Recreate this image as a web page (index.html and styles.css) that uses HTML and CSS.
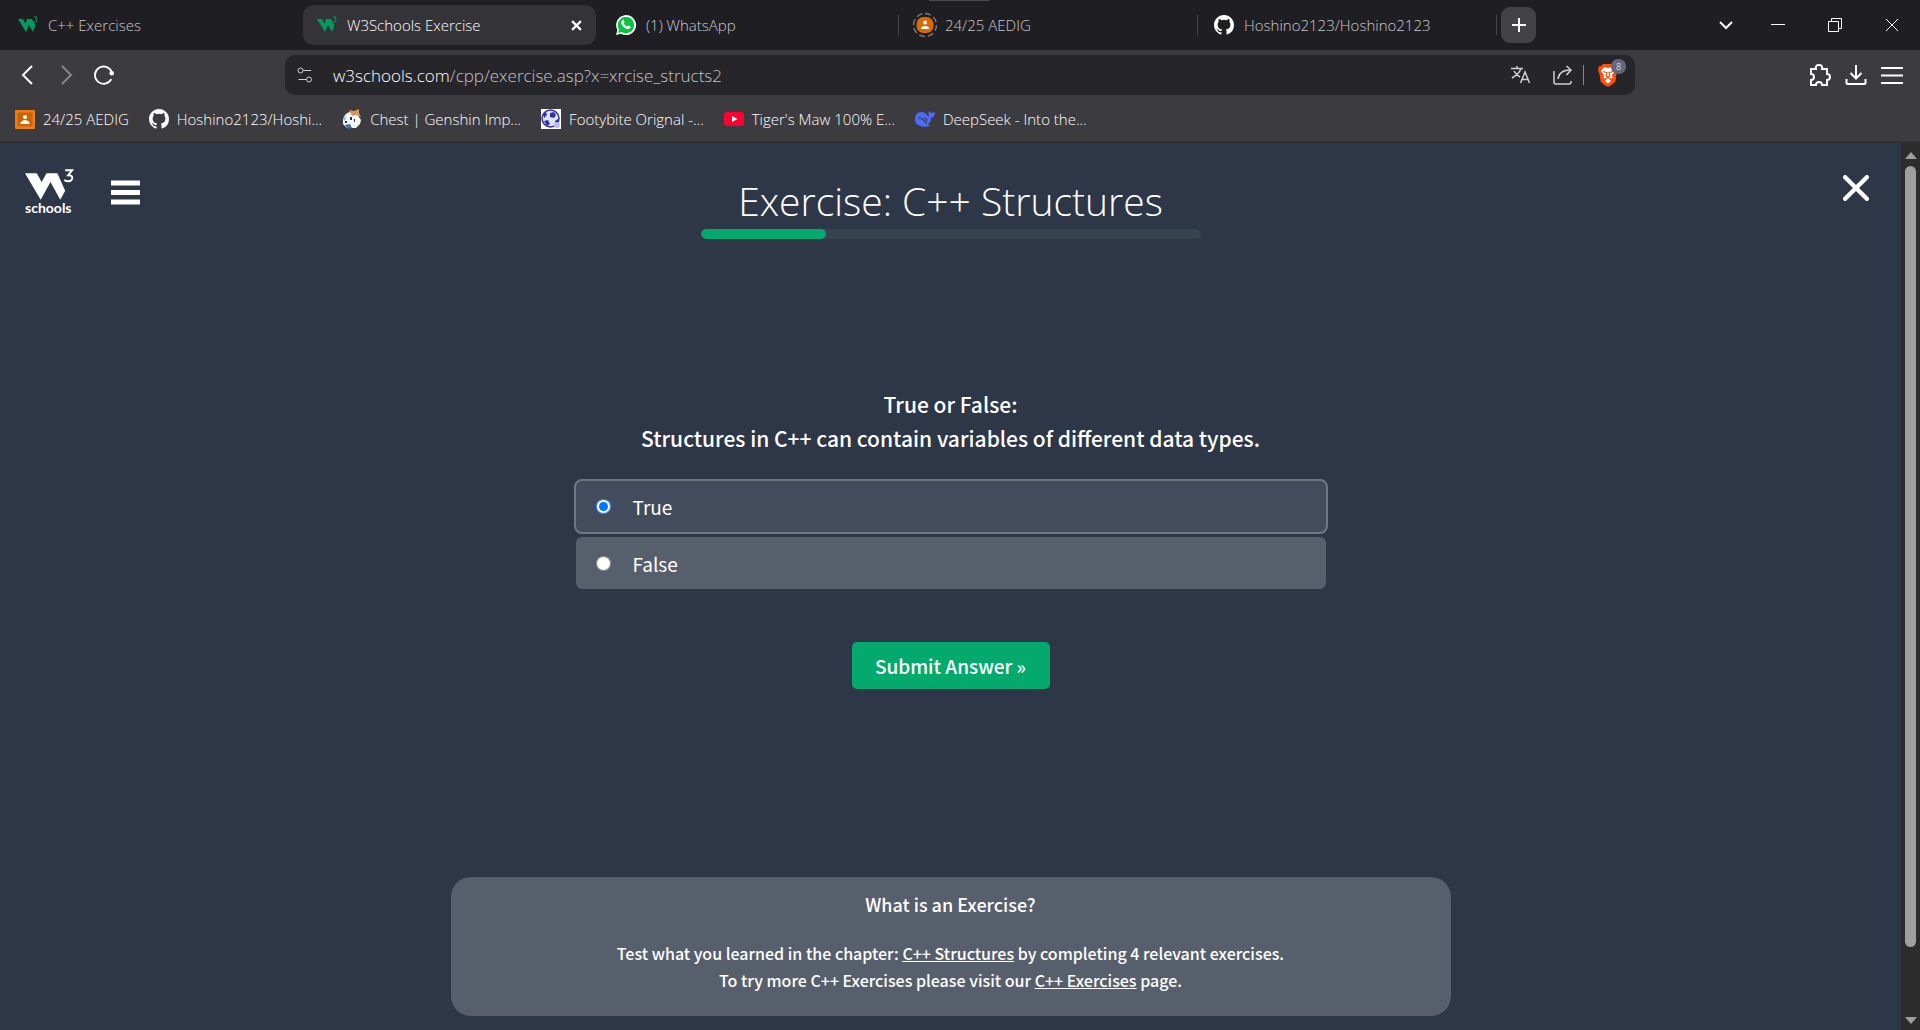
FILE: index.html
```html
<!DOCTYPE html>
<html lang="en">
<head>
<meta charset="utf-8">
<title>W3Schools Exercise</title>
<link rel="stylesheet" href="styles.css">
</head>
<body>
<svg class="defs" aria-hidden="true">
  <symbol id="w3" viewBox="0 0 20 18"><path d="M0 3h5l2.500 4.500L9 3h5l3.500 6-2.500 7-4-7-3 7z"/><path d="M16 1h3l-1.500 2q2 .3 1.500 2.200-.8 1.300-3 .6" fill="none" stroke="currentColor"/></symbol>
  <symbol id="gh" viewBox="0 0 16 16"><path d="M8 0C3.580 0 0 3.580 0 8c0 3.540 2.290 6.530 5.470 7.590.4.070.55-.17.55-.38 0-.19-.01-.82-.01-1.490-2.010.37-2.530-.49-2.690-.94-.09-.23-.48-.94-.82-1.130-.28-.15-.68-.52-.01-.53.63-.01 1.080.58 1.230.82.72 1.210 1.870.87 2.330.66.070-.52.280-.87.510-1.070-1.780-.2-3.640-.89-3.640-3.950 0-.87.310-1.590.82-2.150-.08-.2-.36-1.020.08-2.120 0 0 .67-.21 2.200.82a7.600 7.600 0 0 1 4 0c1.530-1.040 2.200-.82 2.200-.82.44 1.100.16 1.920.08 2.120.51.560.82 1.270.82 2.150 0 3.070-1.870 3.750-3.650 3.950.290.250.540.730.540 1.480 0 1.070-.01 1.930-.01 2.200 0 .21.150.46.550.38A8.010 8.010 0 0 0 16 8c0-4.420-3.580-8-8-8z"/></symbol>
</svg>

<header class="browser">
  <div class="tabstrip">
    <div class="tabs">
      <div class="tab"><svg class="fav w3"><use href="#w3"/></svg><span>C++ Exercises</span></div>
      <div class="tab active"><svg class="fav w3"><use href="#w3"/></svg><span>W3Schools Exercise</span>
        <button class="tab-close" aria-label="Close tab"><svg viewBox="0 0 10 10"><path d="M1 1l8 8M9 1L1 9"/></svg></button></div>
      <div class="tab ruled"><svg class="fav" viewBox="0 0 20 20"><path fill="#fff" d="M0 20l1.400-5A10 10 0 1 1 5 18.700z"/><path fill="#08c440" d="M2 18l1-3.500A8.200 8.200 0 1 1 5.500 17z"/><path fill="#fff" d="M6.500 5.200c.5-.5 1-.4 1.200 0l.8 1.800c.1.400-.5 1-.8 1.300.8 1.600 2 2.600 3.600 3.200.4-.4.9-1.200 1.300-1l1.800.9c.4.200.3 1-.1 1.600-.8.900-2 1.200-3 .9-3-.9-5-2.800-6-5.500-.4-1.200.2-2.400 1.200-3.200z"/></svg><span>(1) WhatsApp</span></div>
      <div class="tab ruled grip"><svg class="fav" viewBox="0 0 20 20"><circle cx="10" cy="10" r="11.500" fill="none" stroke="#777" stroke-width="1.500" stroke-dasharray="6 3"/><rect x="1.500" y="2" width="17" height="16" rx="7" fill="#d96a00"/><circle cx="10" cy="7.500" r="2" fill="#fff"/><path fill="#fff" d="M6 14q0-3 4-3t4 3z"/></svg><span>24/25 AEDIG</span></div>
      <div class="tab ruled"><svg class="fav"><use href="#gh"/></svg><span>Hoshino2123/Hoshino2123</span></div>
    </div>
    <button class="new-tab" aria-label="New tab"><svg viewBox="0 0 14 14"><path d="M7 0v14M0 7h14"/></svg></button>
    <div class="window-buttons">
      <button class="search-tabs" aria-label="Search tabs"><svg viewBox="0 0 14 14"><path d="M1 4l6 6 6-6"/></svg></button>
      <button aria-label="Minimize"><svg viewBox="0 0 14 14"><path d="M0 6.500h14"/></svg></button>
      <button aria-label="Restore"><svg viewBox="0 0 14 14"><path d="M.5 3.500h10v10H.5zM3.500 3V.5h10v10H11"/></svg></button>
      <button aria-label="Close"><svg viewBox="0 0 14 14"><path d="M1 1l12 12M13 1L1 13"/></svg></button>
    </div>
  </div>

  <div class="toolbar">
    <div class="nav">
      <button aria-label="Back"><svg viewBox="0 0 20 20"><path d="M14 1L5 10l9 9"/></svg></button>
      <button class="off" aria-label="Forward"><svg viewBox="0 0 20 20"><path d="M6 1l9 9-9 9"/></svg></button>
      <button aria-label="Reload"><svg viewBox="0 0 22 22"><path d="M19 15.500A9.500 9.500 0 1 1 19.500 8"/><circle cx="19.500" cy="9" r="2.500" fill="currentColor" stroke="none"/></svg></button>
    </div>
    <div class="address">
      <svg class="site" viewBox="0 0 16 16"><circle cx="3.500" cy="3.500" r="2.500"/><path d="M6 3.500h8M1.500 12.500h8"/><circle cx="12" cy="12.500" r="2.500"/></svg>
      <a class="url" href="#"><b>w3schools.com</b>/cpp/exercise.asp?x=xrcise_structs2</a>
      <svg class="tool" viewBox="0 0 20 20"><path d="M0 3.500h12M6 1v2.500M10 3.500Q8 9 1 13M3 6q2 4 6 6M9.500 18L14 7l4.500 11M11 14.500h6"/></svg>
      <svg class="tool" viewBox="0 0 20 20"><path d="M1 6v11q0 2 2 2h13q2 0 2-2v-1M5 14Q6 5 18 5M13.500 1l4.500 4-4.500 5"/></svg>
      <span class="sep"></span>
      <span class="shield"><svg viewBox="0 0 20 23"><path fill="#fb4f0d" d="M5 0h10l2 2 2 0 1 4-1.500 4-1 7Q16 20 10 23 4 20 2.500 17l-1-7L0 6l1-4 2 0z"/><path fill="#fff" d="M10 4l4-1 3 4-3 4 .5 3-3 1.500 1.500 1.500-3 2.500-3-2.500L8.500 15.500 5.500 14l.5-3-3-4 3-4z"/><path fill="none" stroke="#fb4f0d" stroke-width="1.200" d="M5 7.500l3.500 1M15 7.500l-3.500 1M9 8l-.8 4 1.800 1 1.800-1-.8-4M7 15l3-1.200 3 1.200"/></svg><span class="badge">8</span></span>
    </div>
    <div class="actions">
      <button aria-label="Extensions"><svg viewBox="0 0 22 22"><path d="M2 5h5q-1-4 3-4t3 4h5v5q3 0 3 3t-3 3v5h-5q0-3-3-3t-3 3H2v-5q3 0 3-3t-3-3z"/></svg></button>
      <button aria-label="Downloads"><svg viewBox="0 0 22 22"><path d="M11 1v13M5.500 9l5.500 5.500L16.500 9M1.500 15v4q0 1 1 1h17q1 0 1-1v-4"/></svg></button>
      <button aria-label="Menu"><svg viewBox="0 0 22 22"><path d="M0 4h22M0 11.500h22M0 19h22"/></svg></button>
    </div>
  </div>

  <nav class="bookmarks">
    <a href="#"><svg viewBox="0 0 20 20"><rect width="20" height="19" y="1" rx="1" fill="#f07c16"/><rect x="2.500" y="3.500" width="15" height="14" fill="#c86508"/><circle cx="10" cy="8" r="2" fill="#fff"/><path fill="#fff" d="M5.500 15v-1.500Q7 11 10 11t4.500 2.500V15z"/></svg><span>24/25 AEDIG</span></a>
    <a href="#"><svg><use href="#gh"/></svg><span>Hoshino2123/Hoshi...</span></a>
    <a href="#"><svg viewBox="0 0 20 20"><path fill="#f4f6f8" d="M1 10q2-6 7-7l7 2 4 6-1 4-4 4H5l-4-4z"/><path fill="#d9985b" d="M7 1l5 1 5-2 0 4 2 4-5-2-4 1z"/><path fill="#3a6fa8" d="M3 16l5-1 2 4-4 1z"/><path fill="#26314a" d="M8 8h2v3H8zM3 12h2v2H3zM12 10h1v3h-1z"/><path fill="#8fb6d8" d="M1 10l3-3-1 5z"/></svg><span>Chest | Genshin Imp...</span></a>
    <a href="#"><svg viewBox="0 0 20 20"><path fill="#fff" d="M0 0h20v20H0z"/><circle cx="9.500" cy="9.500" r="8.500" fill="#dfe0fa" stroke="#36309c" stroke-width="1.500"/><path fill="#36309c" d="M9 4l4-1 2 3-2 3-4-1zM3 12l4-1 2 4-3 2zM2 5l3-2 1 3-3 3zM14 12l3-2 1 3-3 3z"/><circle cx="16" cy="16" r="3" fill="#b9bdf0"/></svg><span>Footybite Orignal -...</span></a>
    <a href="#"><svg viewBox="0 0 20 20"><rect y="3" width="20" height="14" rx="3" fill="#ff0033"/><path fill="#fff" d="M8 7l5.500 3L8 13z"/></svg><span>Tiger's Maw 100% E...</span></a>
    <a href="#"><svg viewBox="0 0 20 20"><path fill="#4d6bfe" d="M0 10q0-7 7-7 2 0 4 2 2 1 2 3l1-1q-1-2 0-5l2 2q2 0 4-1 0 5-4 6 0 4-3 6l2 2q-8 2-12-1-3-2-3-6z"/><path fill="none" stroke="#3c3b40" stroke-width="1.200" d="M3 9q4-1 9 6M9 9q3 0 3 3"/></svg><span>DeepSeek - Into the...</span></a>
  </nav>
</header>

<div class="viewport">
  <main class="page">
    <div class="top">
      <div class="brand">
        <a class="logo" href="#" aria-label="W3Schools">
          <svg viewBox="0 0 50 32"><path fill="#fff" d="M0 5h12l5 9 5-9h11l8 18-5 9-10-18-10 18z"/><path fill="none" stroke="#fff" stroke-width="2" d="M41 2h7l-4 5q5 0 4 4-2 4-8 1"/></svg>
          <span>schools</span>
        </a>
        <button class="menu" aria-label="Menu"><svg viewBox="0 0 30 24"><path d="M1 2.500h29M1 12h29M1 21.500h29"/></svg></button>
      </div>
      <div class="heading">
        <h1>Exercise: C++ Structures</h1>
        <div class="progress"><div style="width:25%"></div></div>
      </div>
      <div class="end"><button aria-label="Close exercise"><svg viewBox="0 0 24 24"><path d="M2 2l20 20M22 2L2 22"/></svg></button></div>
    </div>

    <form class="quiz">
      <h2>True or False:<br>Structures in C++ can contain variables of different data types.</h2>
      <label class="option"><input type="radio" name="answer" checked><span>True</span></label>
      <label class="option"><input type="radio" name="answer"><span>False</span></label>
      <button class="submit" type="button">Submit Answer »</button>
    </form>

    <section class="about">
      <h3>What is an Exercise?</h3>
      <p>Test what you learned in the chapter: <a href="#">C++ Structures</a> by completing 4 relevant exercises.<br>To try more C++ Exercises please visit our <a href="#">C++ Exercises</a> page.</p>
    </section>
  </main>
  <div class="scrollbar"><i class="up"></i><i class="thumb"></i><i class="down"></i></div>
</div>
</body>
</html>
```
FILE: styles.css
```css
* { box-sizing: border-box; }
body {
  margin: 0;
  min-height: 100vh;
  display: flex;
  flex-direction: column;
  background: #2e3748;
  color: #fff;
  font-family: "Noto Sans CJK SC", sans-serif;
}
button { padding: 0; border: 0; background: none; color: inherit; font: inherit; }
svg { display: block; flex: none; }
a { color: inherit; }
.defs { display: none; }

/* Browser chrome */
.browser {
  background: #3c3b40;
  border-bottom: 2px solid #303035;
  font-family: "Open Sans", sans-serif;
  font-weight: 300;
  font-size: 15px;
}
.browser button svg { fill: none; stroke: currentColor; stroke-width: 2; }
.tabstrip { display: flex; align-items: center; height: 50px; padding-left: 4px; background: #1f1e23; }
.tabs { display: flex; gap: 6px; }
.tab {
  position: relative;
  display: flex;
  align-items: center;
  gap: 10px;
  width: 293px;
  height: 40px;
  padding: 0 14px;
  border-radius: 10px;
  color: #c8c8ca;
}
.tab.active { background: #343338; color: #fff; }
.tab.ruled::after { content: ""; position: absolute; right: -4px; top: 10px; width: 1px; height: 20px; background: #47464b; }
.tab.grip::before { content: ""; position: absolute; left: 28px; top: -5px; width: 60px; height: 1px; background: #4c4b50; }
.fav { width: 20px; height: 20px; fill: #fff; overflow: visible; }
.fav.w3 { height: 18px; fill: #059862; color: #059862; }
.tab-close { margin-left: auto; }
.tab-close svg { width: 11px; height: 11px; }
.new-tab { display: grid; place-items: center; width: 35px; height: 36px; margin-left: 8px; border-radius: 9px; background: #434246; }
.new-tab svg { width: 14px; height: 14px; }
.window-buttons { display: flex; margin-left: auto; }
.window-buttons button { display: grid; place-items: center; width: 57px; height: 50px; }
.window-buttons .search-tabs { width: 46px; }
.window-buttons svg { width: 14px; height: 14px; }
.browser .window-buttons svg { stroke-width: 1; }
.browser .search-tabs svg { stroke-width: 2; }

.toolbar { display: flex; align-items: center; height: 50px; padding: 0 17px 0 18px; }
.nav { display: flex; gap: 18px; width: 267px; }
.nav svg { width: 20px; height: 20px; }
.nav .off { color: #88878b; }
.address { display: flex; align-items: center; width: 1350px; height: 40px; padding: 0 15px 0 12px; border-radius: 10px; background: #26252a; }
.site, .tool { fill: none; stroke: #d0d0d2; stroke-width: 1; }
.site { width: 16px; height: 16px; }
.url { flex: 1; margin-left: 20px; font-size: 17px; color: #c4c4c8; text-decoration: none; }
.url b { font-weight: 300; color: #fff; }
.tool { width: 20px; height: 20px; margin-right: 22px; stroke-width: 1.5; }
.tool + .sep { width: 1px; height: 20px; margin: 0 14px 0 -12px; background: #88888c; }
.shield { position: relative; margin-right: 2px; }
.shield svg { width: 20px; height: 23px; }
.badge { position: absolute; left: 13px; top: -5px; width: 15px; height: 15px; border-radius: 7px; background: #65677a; font-size: 9px; line-height: 15px; text-align: center; }
.actions { display: flex; gap: 14px; margin-left: auto; }
.actions svg { width: 22px; height: 22px; }

.bookmarks { display: flex; align-items: center; gap: 20px; height: 41px; padding: 0 15px 4px; }
.bookmarks a { display: flex; align-items: center; gap: 8px; text-decoration: none; white-space: nowrap; }
.bookmarks svg { width: 20px; height: 20px; fill: #fff; }

/* Page */
.viewport { display: flex; flex: 1; }
.page { flex: 1; display: flex; flex-direction: column; align-items: center; padding-bottom: 14px; }
.top { display: grid; grid-template-columns: 1fr 500px 1fr; width: 100%; padding: 25px 25px 0; }
.brand { display: flex; align-items: flex-start; gap: 36px; }
.logo { display: flex; flex-direction: column; text-decoration: none; font: 700 14px/16px Lato, sans-serif; }
.logo svg { width: 49px; height: 32px; }
.menu { margin-top: 12px; }
.menu svg { width: 30px; height: 25px; stroke: #fff; stroke-width: 5; }
.end { display: flex; justify-content: flex-end; align-items: flex-start; padding: 7px 7px 0 0; }
.end svg { width: 26px; height: 26px; stroke: #fff; stroke-width: 4; stroke-linecap: round; }
h1 { margin: 0; padding-top: 5px; font: 300 39px/56px "Open Sans", sans-serif; text-align: center; white-space: nowrap; }
.progress { height: 10px; border-radius: 5px; background: #38444d; overflow: hidden; }
.progress div { height: 10px; border-radius: 5px; background: #04aa6d; }

.quiz { display: flex; flex-direction: column; align-items: center; margin: auto 0; padding-bottom: 40px; }
h2 { margin: 0 0 24px; font-size: 21px; line-height: 34px; font-weight: 500; text-align: center; white-space: nowrap; }
.option {
  display: flex;
  align-items: center;
  gap: 22px;
  width: 750px;
  height: 52px;
  padding: 0 20px;
  border-radius: 6px;
  background: #585f6c;
  font-size: 19px;
}
.option:has(:checked) { width: 754px; height: 55px; margin-bottom: 3px; border: 2px solid #717782; border-radius: 8px; background: #434c5c; }
.option input { width: 15px; height: 15px; margin: 0; }
.submit { width: 198px; height: 47px; margin-top: 53px; border-radius: 5px; background: #04aa6d; font-size: 19px; font-weight: 500; }

.about { width: 1000px; padding: 11px 20px 22px; border-radius: 20px; background: #585f6c; text-align: center; font-weight: 500; }
h3 { margin: 0 0 20px; font-size: 18px; line-height: 32px; font-weight: 500; }
.about p { margin: 0; font-size: 16px; line-height: 27px; }

.scrollbar { display: flex; flex-direction: column; align-items: center; width: 19px; padding: 9px 0 6px; background: #2c2c2c; }
.scrollbar i { width: 0; border: 6px solid transparent; }
.scrollbar .up { border-top: 0; border-bottom: 7px solid #9f9f9f; }
.scrollbar .down { border-bottom: 0; border-top: 7px solid #9f9f9f; }
.scrollbar .thumb { flex: 1; width: 11px; margin: 7px 0 70px; border: 0; border-radius: 6px; background: #9f9f9f; }
```
